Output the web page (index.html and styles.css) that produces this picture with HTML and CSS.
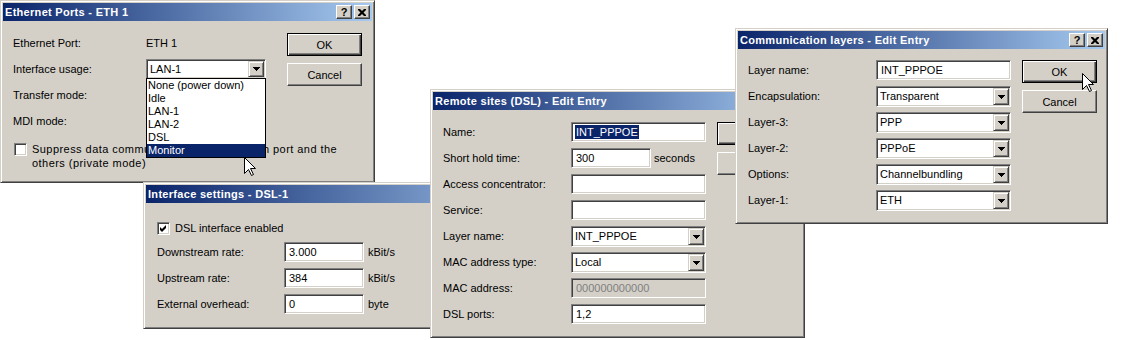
FILE: index.html
```html
<!DOCTYPE html>
<html lang="en">
<head>
  <meta charset="UTF-8" />
  <title>LANconfig - Dialogs</title>
  <link rel="stylesheet" href="styles.css">
</head>
<body>
  <div class="desktop">

    <!-- Ethernet Ports -->
    <div class="window win-eth">
      <div class="titlebar">
        <span class="title">Ethernet Ports - ETH 1</span>
        <span class="tbtn">?</span>
        <span class="tbtn"><svg class="close" viewBox="0 0 8 7"><path d="M0 0h2l2 2 2-2h2v1L5.5 3.5 8 6v1H6L4 5 2 7H0V6l2.5-2.5L0 1z"/></svg></span>
      </div>
      <div class="pane">
        <div class="top">
          <div class="form eth-form">
            <span class="label">Ethernet Port:</span>
            <span class="label">ETH 1</span>
            <span class="label">Interface usage:</span>
            <div class="combo">
              <span class="text">LAN-1</span>
              <span class="drop"><svg class="arrow" viewBox="0 0 7 4"><path d="M0 0h7v1h-1v1h-1v1h-1v1h-1v-1h-1v-1h-1v-1h-1z"/></svg></span>
              <ul class="list">
                <li>None (power down)</li>
                <li>Idle</li>
                <li>LAN-1</li>
                <li>LAN-2</li>
                <li>DSL</li>
                <li class="selected">Monitor</li>
              </ul>
            </div>
            <span class="label">Transfer mode:</span>
            <div class="combo">
              <span class="text"></span>
              <span class="drop"><svg class="arrow" viewBox="0 0 7 4"><path d="M0 0h7v1h-1v1h-1v1h-1v1h-1v-1h-1v-1h-1v-1h-1z"/></svg></span>
            </div>
            <span class="label">MDI mode:</span>
            <div class="combo">
              <span class="text"></span>
              <span class="drop"><svg class="arrow" viewBox="0 0 7 4"><path d="M0 0h7v1h-1v1h-1v1h-1v1h-1v-1h-1v-1h-1v-1h-1z"/></svg></span>
            </div>
          </div>
          <div class="buttons">
            <button class="btn default">OK</button>
            <button class="btn">Cancel</button>
          </div>
        </div>
        <div class="check-row eth-check">
          <span class="checkbox"></span>
          <span class="check-text">Suppress data communication between each port and the others (private mode)</span>
        </div>
      </div>
    </div>

    <!-- Interface settings -->
    <div class="window win-dsl">
      <div class="titlebar">
        <span class="title">Interface settings - DSL-1</span>
        <span class="tbtn">?</span>
        <span class="tbtn"><svg class="close" viewBox="0 0 8 7"><path d="M0 0h2l2 2 2-2h2v1L5.5 3.5 8 6v1H6L4 5 2 7H0V6l2.5-2.5L0 1z"/></svg></span>
      </div>
      <div class="pane dsl-pane">
        <div class="check-row">
          <span class="checkbox"><svg viewBox="1 1 11 11"><polygon points="3,5 5,7 9,3 9,6 5,10 3,8"/></svg></span>
          <span class="check-text">DSL interface enabled</span>
        </div>
        <div class="form dsl-form">
          <span class="label">Downstream rate:</span>
          <div class="field"><span class="text">3.000</span></div>
          <span class="label unit">kBit/s</span>
          <span class="label">Upstream rate:</span>
          <div class="field"><span class="text">384</span></div>
          <span class="label unit">kBit/s</span>
          <span class="label">External overhead:</span>
          <div class="field"><span class="text">0</span></div>
          <span class="label unit">byte</span>
        </div>
      </div>
    </div>

    <!-- Remote sites -->
    <div class="window win-remote">
      <div class="titlebar">
        <span class="title">Remote sites (DSL) - Edit Entry</span>
        <span class="tbtn">?</span>
        <span class="tbtn"><svg class="close" viewBox="0 0 8 7"><path d="M0 0h2l2 2 2-2h2v1L5.5 3.5 8 6v1H6L4 5 2 7H0V6l2.5-2.5L0 1z"/></svg></span>
      </div>
      <div class="pane edit-pane">
        <div class="form">
          <span class="label">Name:</span>
          <div class="field"><span class="text"><span class="sel">INT_PPPOE</span></span></div>
          <span class="label">Short hold time:</span>
          <div class="inline">
            <div class="field short"><span class="text">300</span></div>
            <span class="label">seconds</span>
          </div>
          <span class="label">Access concentrator:</span>
          <div class="field"><span class="text"></span></div>
          <span class="label">Service:</span>
          <div class="field"><span class="text"></span></div>
          <span class="label">Layer name:</span>
          <div class="combo">
            <span class="text">INT_PPPOE</span>
            <span class="drop"><svg class="arrow" viewBox="0 0 7 4"><path d="M0 0h7v1h-1v1h-1v1h-1v1h-1v-1h-1v-1h-1v-1h-1z"/></svg></span>
          </div>
          <span class="label">MAC address type:</span>
          <div class="combo">
            <span class="text">Local</span>
            <span class="drop"><svg class="arrow" viewBox="0 0 7 4"><path d="M0 0h7v1h-1v1h-1v1h-1v1h-1v-1h-1v-1h-1v-1h-1z"/></svg></span>
          </div>
          <span class="label">MAC address:</span>
          <div class="field disabled"><span class="text">000000000000</span></div>
          <span class="label">DSL ports:</span>
          <div class="field"><span class="text">1,2</span></div>
        </div>
        <div class="buttons">
          <button class="btn default">OK</button>
          <button class="btn">Cancel</button>
        </div>
      </div>
    </div>

    <!-- Communication layers -->
    <div class="window win-layers">
      <div class="titlebar">
        <span class="title">Communication layers - Edit Entry</span>
        <span class="tbtn">?</span>
        <span class="tbtn"><svg class="close" viewBox="0 0 8 7"><path d="M0 0h2l2 2 2-2h2v1L5.5 3.5 8 6v1H6L4 5 2 7H0V6l2.5-2.5L0 1z"/></svg></span>
      </div>
      <div class="pane edit-pane layers-pane">
        <div class="form">
          <span class="label">Layer name:</span>
          <div class="field"><span class="text">INT_PPPOE</span></div>
          <span class="label">Encapsulation:</span>
          <div class="combo">
            <span class="text">Transparent</span>
            <span class="drop"><svg class="arrow" viewBox="0 0 7 4"><path d="M0 0h7v1h-1v1h-1v1h-1v1h-1v-1h-1v-1h-1v-1h-1z"/></svg></span>
          </div>
          <span class="label">Layer-3:</span>
          <div class="combo">
            <span class="text">PPP</span>
            <span class="drop"><svg class="arrow" viewBox="0 0 7 4"><path d="M0 0h7v1h-1v1h-1v1h-1v1h-1v-1h-1v-1h-1v-1h-1z"/></svg></span>
          </div>
          <span class="label">Layer-2:</span>
          <div class="combo">
            <span class="text">PPPoE</span>
            <span class="drop"><svg class="arrow" viewBox="0 0 7 4"><path d="M0 0h7v1h-1v1h-1v1h-1v1h-1v-1h-1v-1h-1v-1h-1z"/></svg></span>
          </div>
          <span class="label">Options:</span>
          <div class="combo">
            <span class="text">Channelbundling</span>
            <span class="drop"><svg class="arrow" viewBox="0 0 7 4"><path d="M0 0h7v1h-1v1h-1v1h-1v1h-1v-1h-1v-1h-1v-1h-1z"/></svg></span>
          </div>
          <span class="label">Layer-1:</span>
          <div class="combo">
            <span class="text">ETH</span>
            <span class="drop"><svg class="arrow" viewBox="0 0 7 4"><path d="M0 0h7v1h-1v1h-1v1h-1v1h-1v-1h-1v-1h-1v-1h-1z"/></svg></span>
          </div>
        </div>
        <div class="buttons">
          <button class="btn default">OK</button>
          <button class="btn">Cancel</button>
        </div>
      </div>
    </div>

    <!-- mouse pointers -->
    <svg class="cursor cursor-eth" viewBox="0 0 12 19"><path d="M0.5 0.5V16.5L4.5 12.5L7.5 18.5L9.5 17.5L6.5 11.5H11.5Z"/></svg>
    <svg class="cursor cursor-layers" viewBox="0 0 12 19"><path d="M0.5 0.5V16.5L4.5 12.5L7.5 18.5L9.5 17.5L6.5 11.5H11.5Z"/></svg>
  </div>
</body>
</html>
```

FILE: styles.css
```css
body {
  margin: 0;
  background: #fff;
  font-family: "Liberation Sans", Arial, sans-serif;
  font-size: 11px;
  color: #000;
}
.desktop {
  position: relative;
  width: 1134px;
  height: 340px;
  overflow: hidden;
}

/* windows */
.window {
  position: absolute;
  box-sizing: border-box;
  display: flex;
  flex-direction: column;
  padding: 2px;
  background: #d4d0c8;
  border: 1px solid;
  border-color: #d4d0c8 #404040 #404040 #d4d0c8;
  box-shadow: inset 1px 1px #fff, inset -1px -1px #808080;
}
.win-eth { left: 0; top: 0; width: 375px; height: 183px; z-index: 1; }
.win-dsl { left: 143px; top: 182px; width: 420px; height: 147px; z-index: 2; }
.win-remote { left: 430px; top: 89px; width: 375px; height: 249px; z-index: 3; }
.win-layers { left: 735px; top: 28px; width: 373px; height: 196px; z-index: 4; }

.titlebar {
  flex: none;
  height: 18px;
  display: flex;
  align-items: center;
  gap: 2px;
  padding: 0 2px;
  background: linear-gradient(to right, #0a246a, #a6caf0);
  color: #fff;
}
.title {
  flex: 1;
  font-weight: bold;
  letter-spacing: 0.3px;
  white-space: nowrap;
  overflow: hidden;
}
.tbtn {
  width: 16px;
  height: 14px;
  box-sizing: border-box;
  display: flex;
  align-items: center;
  justify-content: center;
  background: #d4d0c8;
  color: #000;
  font-weight: bold;
  line-height: 1;
  border: 1px solid;
  border-color: #fff #404040 #404040 #fff;
  box-shadow: inset -1px -1px #808080;
}
.close {
  width: 8px;
  height: 7px;
  fill: #000;
}

/* content */
.pane {
  flex: 1;
  padding: 12px 10px 0;
}
.top {
  display: flex;
  justify-content: space-between;
  align-items: flex-start;
}
.form {
  display: grid;
  grid-template-columns: 128px 135px;
  grid-auto-rows: 20px;
  row-gap: 6px;
  align-items: start;
}
.eth-form { grid-template-columns: 133px 120px; }
.label {
  line-height: 20px;
  white-space: nowrap;
}
.buttons {
  display: flex;
  flex-direction: column;
  gap: 7px;
}
.btn {
  width: 75px;
  height: 23px;
  padding: 0;
  font: inherit;
  color: #000;
  background: #d4d0c8;
  border: 1px solid;
  border-color: #fff #404040 #404040 #fff;
  box-shadow: inset -1px -1px #808080;
}
.btn.default {
  border-color: #000;
  box-shadow: inset 1px 1px #fff, inset -1px -1px #404040, inset -2px -2px #808080;
}

/* fields */
.field,
.combo {
  position: relative;
  height: 20px;
  box-sizing: border-box;
  display: flex;
  padding: 1px;
  background: #fff;
  border: 1px solid;
  border-color: #808080 #fff #fff #808080;
  box-shadow: inset 1px 1px #404040, inset -1px -1px #d4d0c8;
}
.combo { height: 21px; }
.eth-form .combo { height: 20px; }
.field .text,
.combo .text {
  flex: 1;
  padding-left: 3px;
  line-height: 16px;
  white-space: nowrap;
  overflow: hidden;
}
.combo .text { padding-left: 2px; line-height: 17px; }
.eth-form .combo .text { line-height: 16px; }
.field.disabled {
  background: #d4d0c8;
  color: #808080;
}
.field.short { width: 80px; }
.sel {
  display: inline-block;
  margin-left: -1px;
  padding: 0 1px;
  line-height: 14px;
  background: #0a246a;
  color: #fff;
}
.inline {
  display: flex;
  gap: 3px;
}
.drop {
  width: 16px;
  box-sizing: border-box;
  display: flex;
  align-items: center;
  justify-content: center;
  background: #d4d0c8;
  border: 1px solid;
  border-color: #d4d0c8 #404040 #404040 #d4d0c8;
  box-shadow: inset 1px 1px #fff, inset -1px -1px #808080;
}
.arrow {
  width: 7px;
  height: 4px;
  fill: #000;
}

/* open drop-down list */
.list {
  position: absolute;
  top: 100%;
  left: -1px;
  z-index: 5;
  width: 120px;
  box-sizing: border-box;
  margin: 0;
  padding: 0;
  list-style: none;
  background: #fff;
  border: 1px solid #000;
}
.list li {
  height: 13px;
  line-height: 13px;
  padding-left: 1px;
  white-space: nowrap;
}
.list li.selected {
  background: #0a246a;
  color: #fff;
}

/* check boxes */
.check-row {
  display: flex;
  align-items: flex-start;
  gap: 5px;
  line-height: 14px;
}
.eth-check {
  margin: 11px 0 0 1px;
}
.eth-check .check-text {
  max-width: 318px;
  letter-spacing: 0.45px;
}
.checkbox {
  flex: none;
  width: 13px;
  height: 13px;
  box-sizing: border-box;
  margin-top: 1px;
  background: #fff;
  border: 1px solid;
  border-color: #808080 #fff #fff #808080;
  box-shadow: inset 1px 1px #404040, inset -1px -1px #d4d0c8;
}
.checkbox svg {
  display: block;
  width: 11px;
  height: 11px;
  fill: #000;
}

.dsl-pane { padding: 18px 11px 0; }
.dsl-form {
  margin-top: 7px;
  grid-template-columns: 127px 80px auto;
}
.unit { padding-left: 4px; }

.edit-pane {
  display: flex;
  align-items: flex-start;
  gap: 11px;
}
.layers-pane { padding: 11px 8px 0 10px; }

/* mouse pointers */
.cursor {
  position: absolute;
  z-index: 10;
  width: 12px;
  height: 19px;
  fill: #fff;
  stroke: #000;
  stroke-width: 1;
}
.cursor-eth { left: 244px; top: 157px; }
.cursor-layers { left: 1082px; top: 73px; }
```
